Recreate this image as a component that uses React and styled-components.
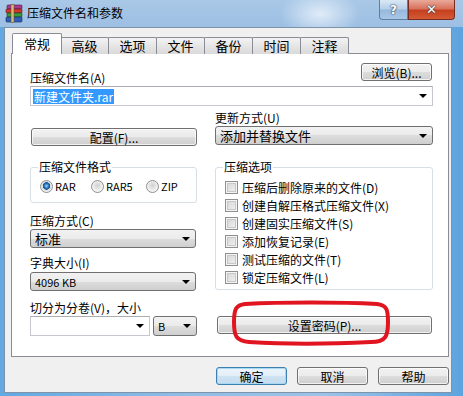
import styled, { createGlobalStyle } from "styled-components";

const GlobalStyle = createGlobalStyle`
  html, body {
    margin: 0;
    padding: 0;
  }
  body {
    width: 463px;
    height: 396px;
    overflow: hidden;
    font-family: "Noto Sans CJK SC", "Liberation Sans", sans-serif;
    font-size: 12px;
    color: #000;
  }
`;

const Window = styled.div`
  position: relative;
  width: 463px;
  height: 396px;
  display: flex;
  flex-direction: column;
  background: linear-gradient(to right, #63a8e0, #8fbde6 40%, #9cc3e8 70%, #5ea3de);
  overflow: hidden;
`;

const TitleBar = styled.div`
  height: 27px;
  flex: none;
  display: flex;
  align-items: flex-start;
  padding: 0 8px 0 5px;
  background: radial-gradient(ellipse 40px 24px at 320px 14px, rgba(230, 240, 250, 0.9), rgba(230, 240, 250, 0) 100%),
    linear-gradient(to bottom, #a9c8e7, #9dbfe3);
`;

const TitleIcon = styled.svg`
  width: 19px;
  height: 20px;
  margin-top: 4px;
  flex: none;
`;

const TitleText = styled.div`
  margin: 5px 0 0 3px;
  line-height: 16px;
  font-size: 12px;
  color: #000;
`;

const CaptionButtons = styled.div`
  margin-left: auto;
  display: flex;
`;

const CaptionButton = styled.div`
  width: ${(p) => p.$w}px;
  height: 19px;
  display: flex;
  align-items: center;
  justify-content: center;
  font-family: "DejaVu Sans", sans-serif;
  font-weight: bold;
  color: #fff;
  text-shadow: 0 0 2px #23374f, 0 0 1px #23374f;
  border: 1px solid ${(p) => (p.$close ? "#7a2b1f" : "#5e7fa3")};
  border-top: none;
  border-radius: ${(p) => (p.$close ? "0 0 4px 0" : "0 0 0 4px")};
  background: ${(p) =>
    p.$close
      ? "linear-gradient(to bottom, #e9a99b, #d8735e 45%, #c6401f 55%, #d45a36)"
      : "linear-gradient(to bottom, #dbe8f4, #b8d0ea 45%, #98b9de 55%, #a9c8e6)"};
  font-size: ${(p) => (p.$close ? 13 : 12)}px;
`;

const Client = styled.div`
  flex: 1;
  margin: 0 11px 3px 4px;
  border: 1px solid #7d93aa;
  background: #f0f0f0;
  padding: 5px 2px 0 6px;
  display: flex;
  flex-direction: column;
`;

const TabStrip = styled.div`
  height: 21px;
  display: flex;
  align-items: flex-end;
  margin: 0 0 -1px 1px;
`;

const Tab = styled.div`
  box-sizing: border-box;
  position: relative;
  width: ${(p) => (p.$active ? 50 : 49)}px;
  height: ${(p) => (p.$active ? 21 : 17)}px;
  margin-left: ${(p) => p.$ml || 0}px;
  border: 1px solid #898c95;
  border-bottom: none;
  border-radius: 2px 2px 0 0;
  text-align: center;
  font-size: 13px;
  line-height: ${(p) => (p.$active ? 19 : 16)}px;
  background: ${(p) => (p.$active ? "#fff" : "linear-gradient(to bottom, #f4f4f4, #e5e5e5 50%, #dadada)")};
  z-index: ${(p) => (p.$active ? 1 : 0)};
`;

const Panel = styled.div`
  box-sizing: border-box;
  width: 438px;
  height: 304px;
  border: 1px solid #898c95;
  background: #fff;
  padding: 9px 15px 0 18px;
`;

const TopRow = styled.div`
  height: 23px;
  display: flex;
  justify-content: space-between;
`;

const Label = styled.div`
  line-height: 16px;
  margin-top: ${(p) => p.$mt || 0}px;
  white-space: nowrap;
`;

const EndLabel = styled(Label)`
  align-self: flex-end;
`;

const Button = styled.div`
  box-sizing: border-box;
  width: ${(p) => p.$w}px;
  height: 18px;
  margin-top: ${(p) => p.$mt || 0}px;
  margin-left: ${(p) => p.$ml || 0}px;
  border: 1px solid ${(p) => (p.$default ? "#3c7fb1" : "#707070")};
  border-radius: 3px;
  display: flex;
  align-items: center;
  justify-content: center;
  white-space: nowrap;
  background: ${(p) =>
    p.$default
      ? "linear-gradient(to bottom, #edf5fb, #e2eef8 50%, #cfe3f3 50%, #c4dcef)"
      : "linear-gradient(to bottom, #f2f2f2, #ebebeb 50%, #dddddd 50%, #cfcfcf)"};
  box-shadow: inset 0 0 0 1px ${(p) => (p.$default ? "#a8d8f4" : "rgba(255,255,255,0.7)")};
  align-self: flex-start;
`;

const Combo = styled.div`
  box-sizing: border-box;
  position: relative;
  width: ${(p) => (p.$w ? `${p.$w}px` : "100%")};
  height: ${(p) => p.$h || 19}px;
  margin-top: ${(p) => p.$mt || 0}px;
  display: flex;
  align-items: center;
  padding: 0 16px 0 ${(p) => (p.$edit ? 2 : 4)}px;
  border: 1px solid ${(p) => (p.$edit ? "#c5c8d0" : "#707070")};
  border-top-color: ${(p) => (p.$edit ? "#abadb3" : "#707070")};
  border-radius: ${(p) => (p.$edit ? 0 : 3)}px;
  background: ${(p) =>
    p.$edit ? "#fff" : "linear-gradient(to bottom, #f2f2f2, #ebebeb 50%, #dddddd 50%, #cfcfcf)"};
  white-space: nowrap;
  font-size: ${(p) => p.$fs || 12}px;
`;

const Arrow = styled.span`
  position: absolute;
  right: 5px;
  top: 50%;
  margin-top: -2px;
  width: 0;
  height: 0;
  border-left: 4px solid transparent;
  border-right: 4px solid transparent;
  border-top: 4px solid #000;
`;

const Selected = styled.span`
  background: #3399ff;
  color: #fff;
  padding: 0 1px;
  line-height: 15px;
`;

const Columns = styled.div`
  display: flex;
  gap: 18px;
`;

const Column = styled.div`
  width: ${(p) => p.$w}px;
  display: flex;
  flex-direction: column;
`;

const Group = styled.fieldset`
  margin: ${(p) => p.$mt}px 0 0 0;
  padding: 0 6px ${(p) => p.$pb}px 7px;
  border: 1px solid #d5dfe5;
  border-radius: 3px;
  min-width: 0;
`;

const Legend = styled.legend`
  padding: 0 1px;
  line-height: 14px;
  font-size: 12px;
`;

const RadioRow = styled.div`
  display: grid;
  grid-template-columns: 51px 55px auto;
  padding: 4px 0 0 2px;
  height: 16px;
`;

const RadioItem = styled.div`
  display: flex;
  align-items: center;
  gap: 2px;
  font-size: 11px;
`;

const Radio = styled.span`
  box-sizing: border-box;
  width: 13px;
  height: 13px;
  border-radius: 50%;
  border: 1px solid #8e8f8f;
  background: ${(p) =>
    p.$on
      ? "radial-gradient(circle at 50% 45%, #a6d4f8 0, #2f7fc4 2px, #13508f 3.5px, #d9dadb 4px, #f7f7f7 6px)"
      : "radial-gradient(circle at 50% 40%, #d0d1d2, #f6f6f6 6px)"};
  flex: none;
`;

const CheckList = styled.div`
  padding-top: 4px;
  padding-left: 2px;
`;

const CheckRow = styled.div`
  height: 18px;
  display: flex;
  align-items: center;
  gap: 4px;
  white-space: nowrap;
`;

const Check = styled.span`
  box-sizing: border-box;
  width: 13px;
  height: 13px;
  border: 1px solid #8e8f8f;
  background: linear-gradient(135deg, #d2d2d2, #f4f4f4);
  box-shadow: inset 0 0 0 1px #f4f4f4, inset 0 0 0 2px #c8c8c8;
  flex: none;
`;

const VolumeRow = styled.div`
  display: flex;
  gap: 3px;
`;

const Footer = styled.div`
  display: flex;
  justify-content: flex-end;
  gap: 10px;
  margin-top: 10px;
`;

const Mark = styled.svg`
  position: absolute;
  left: 231px;
  top: 300px;
  width: 160px;
  height: 46px;
  pointer-events: none;
`;

const options = [
  "压缩后删除原来的文件(D)",
  "创建自解压格式压缩文件(X)",
  "创建固实压缩文件(S)",
  "添加恢复记录(E)",
  "测试压缩的文件(T)",
  "锁定压缩文件(L)",
];

const tabs = ["高级", "选项", "文件", "备份", "时间", "注释"];

export default function App() {
  return (
    <Window>
      <GlobalStyle />
      <TitleBar>
        <TitleIcon viewBox="0 0 19 20">
          <rect x="2" y="1" width="15" height="4" rx="1" fill="#a53a8e" stroke="#4a1a40" strokeWidth="0.6" />
          <rect x="1" y="5" width="16" height="4" rx="1" fill="#d0362e" stroke="#5a1510" strokeWidth="0.6" />
          <rect x="2" y="9" width="15" height="4" rx="1" fill="#3a9a3c" stroke="#17421a" strokeWidth="0.6" />
          <rect x="1" y="13" width="16" height="5" rx="1" fill="#2f5fb8" stroke="#142a55" strokeWidth="0.6" />
          <rect x="6" y="0.5" width="3" height="18" fill="#d6b77a" stroke="#6b5224" strokeWidth="0.5" />
        </TitleIcon>
        <TitleText>压缩文件名和参数</TitleText>
        <CaptionButtons>
          <CaptionButton $w={27}>?</CaptionButton>
          <CaptionButton $w={45} $close>✕</CaptionButton>
        </CaptionButtons>
      </TitleBar>
      <Client>
        <TabStrip>
          <Tab $active>常规</Tab>
          {tabs.map((t, i) => (
            <Tab key={t} $ml={i === 0 ? -2 : -1}>
              {t}
            </Tab>
          ))}
        </TabStrip>
        <Panel>
          <TopRow>
            <EndLabel>压缩文件名(A)</EndLabel>
            <Button $w={71} style={{ marginRight: 1 }}>浏览(B)...</Button>
          </TopRow>
          <Combo $edit $h={20}>
            <Selected>新建文件夹.rar</Selected>
            <Arrow />
          </Combo>
          <Columns>
            <Column $w={167}>
              <Button $w={166} $mt={22} $ml={1}>配置(F)...</Button>
              <Group $mt={14} $pb={8}>
                <Legend>压缩文件格式</Legend>
                <RadioRow>
                  <RadioItem><Radio $on />RAR</RadioItem>
                  <RadioItem><Radio />RAR5</RadioItem>
                  <RadioItem><Radio />ZIP</RadioItem>
                </RadioRow>
              </Group>
              <Label $mt={10}>压缩方式(C)</Label>
              <Combo $w={166} $fs={13}>
                标准
                <Arrow />
              </Combo>
              <Label $mt={7}>字典大小(I)</Label>
              <Combo $w={166} $mt={1} $fs={11}>
                4096 KB
                <Arrow />
              </Combo>
              <Label $mt={9}>切分为分卷(V)，大小</Label>
              <VolumeRow>
                <Combo $edit $w={120} $h={20}>
                  <Arrow />
                </Combo>
                <Combo $w={44} $h={20} $fs={11}>
                  B
                  <Arrow />
                </Combo>
              </VolumeRow>
            </Column>
            <Column $w={218}>
              <Label $mt={4}>更新方式(U)</Label>
              <Combo $fs={13}>
                添加并替换文件
                <Arrow />
              </Combo>
              <Group $mt={15} $pb={3}>
                <Legend>压缩选项</Legend>
                <CheckList>
                  {options.map((o) => (
                    <CheckRow key={o}>
                      <Check />
                      {o}
                    </CheckRow>
                  ))}
                </CheckList>
              </Group>
              <Button $w={215} $mt={26} $ml={2}>设置密码(P)...</Button>
            </Column>
          </Columns>
        </Panel>
        <Footer>
          <Button $w={71} $default>确定</Button>
          <Button $w={71}>取消</Button>
          <Button $w={71}>帮助</Button>
        </Footer>
      </Client>
      <Mark viewBox="0 0 160 46">
        <path
          d="M14 4 C50 2 110 2 146 4 C156 5 157 10 157 22 C157 36 155 42 140 42 C100 44 50 44 18 42 C5 41 3 36 3 22 C3 9 5 5 14 4 Z"
          fill="none"
          stroke="#e01520"
          strokeWidth="4"
        />
      </Mark>
    </Window>
  );
}
